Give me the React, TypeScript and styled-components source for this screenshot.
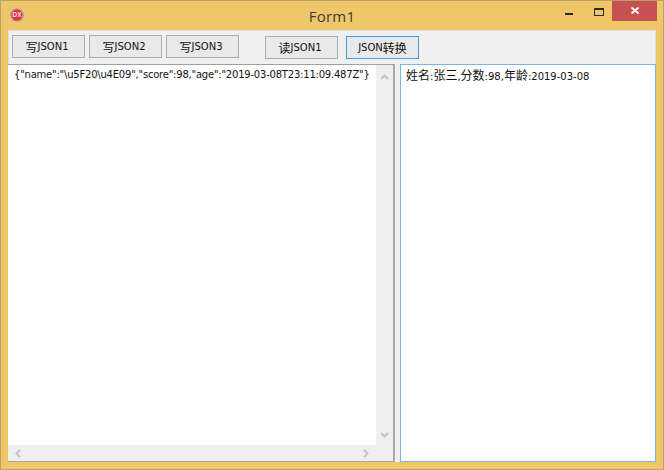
import React from "react";
import styled, { createGlobalStyle } from "styled-components";

const Global = createGlobalStyle`
  html, body { margin: 0; padding: 0; width: 664px; height: 470px; overflow: hidden; background: #efc768; }
  #root { width: 664px; height: 470px; }
`;

const Win = styled.div`
  box-sizing: border-box;
  width: 664px;
  height: 470px;
  display: flex;
  flex-direction: column;
  background: #efc768;
  border: 1px solid #b9a268;
  font-family: "DejaVu Sans", "Noto Sans CJK SC", sans-serif;
`;

const TitleBar = styled.div`
  position: relative;
  height: 29px;
  flex: none;
  display: flex;
  align-items: center;
  justify-content: center;
`;

const Title = styled.div`
  font-family: "Open Sans", sans-serif;
  font-size: 15px;
  color: #3c3c3c;
  margin-top: 1px;
  letter-spacing: 0.2px;
`;

const AppIcon = styled.svg`
  position: absolute;
  left: 9px;
  top: 7px;
`;

const Controls = styled.div`
  position: absolute;
  right: 6px;
  top: 0;
  display: flex;
  align-items: flex-start;
`;

const Ctl = styled.div<{ $w: number }>`
  width: ${(p) => p.$w}px;
  height: 20px;
  display: flex;
  align-items: center;
  justify-content: center;
`;

const CloseBtn = styled(Ctl)`
  background: #c75050;
`;

const Client = styled.div`
  flex: 1;
  margin: 0 7px 7px 7px;
  border: 1px solid #dcdcdc;
  border-bottom: 0;
  background: #f0f0f0;
  display: flex;
  flex-direction: column;
  min-height: 0;
`;

const Toolbar = styled.div`
  height: 33px;
  flex: none;
  display: flex;
  align-items: flex-start;
  padding: 4px 0 0 0;
  box-sizing: border-box;
`;

const Btn = styled.button<{ $ml?: number; $mt?: number; $focus?: boolean }>`
  box-sizing: border-box;
  width: 73px;
  height: 23px;
  margin-left: ${(p) => p.$ml ?? 4}px;
  margin-top: ${(p) => p.$mt ?? 0}px;
  padding: 0 ${(p) => (p.$focus ? 0 : 3)}px 0 0;
  border: 1px solid ${(p) => (p.$focus ? "#3c9df0" : "#adadad")};
  background: #e9e9e9;
  color: #111;
  font-family: "DejaVu Sans", "Noto Sans CJK SC", sans-serif;
  font-size: 10px;
  display: flex;
  align-items: center;
  justify-content: center;
  white-space: pre;
`;

const Cjk = styled.span`
  font-family: "Noto Sans CJK SC", sans-serif;
  font-size: 12px;
  letter-spacing: 0;
`;

const Panes = styled.div`
  flex: 1;
  display: flex;
  min-height: 0;
`;

const LeftMemo = styled.div`
  box-sizing: border-box;
  width: 387px;
  flex: none;
  border-top: 1px solid #a0a0a0;
  border-right: 2px solid #a9a9a9;
  border-bottom: 1px solid #a9a9a9;
  background: #fff;
  display: grid;
  grid-template-columns: minmax(0, 1fr) 17px;
  grid-template-rows: minmax(0, 1fr) 16px;
  margin-left: -1px;
`;

const MemoText = styled.div`
  padding: 3px 0 0 6px;
  font-size: 10px;
  line-height: 14px;
  color: #111;
  white-space: pre;
  letter-spacing: -0.21px;
`;

const VScroll = styled.div`
  grid-row: 1 / 3;
  grid-column: 2;
  background: #efefef;
  display: flex;
  flex-direction: column;
  align-items: center;
  justify-content: space-between;
  padding: 8px 0 22px;
  box-sizing: border-box;
`;

const HScroll = styled.div`
  background: #efefef;
  display: flex;
  align-items: center;
  justify-content: space-between;
  padding: 0 6px;
`;

const Splitter = styled.div`
  width: 5px;
  flex: none;
`;

const RightMemo = styled.div`
  flex: 1;
  box-sizing: border-box;
  border: 1px solid #7ab5e8;
  background: #fff;
  padding: 3px 0 0 5px;
  font-size: 10px;
  line-height: 14px;
  color: #111;
  white-space: pre;
  margin-right: -1px;
`;

const Chev = ({ d }: { d: string }) => (
  <svg width="9" height="9" viewBox="0 0 9 9">
    <path d={d} fill="none" stroke="#c4c4c4" strokeWidth="2" />
  </svg>
);

export default function App() {
  return (
    <Win>
      <Global />
      <TitleBar>
        <AppIcon width="14" height="14" viewBox="0 0 14 14">
          <circle cx="7" cy="7" r="7" fill="#b5a8a0" />
          <circle cx="7" cy="7" r="5.6" fill="#e5303c" />
          <text x="7" y="9.2" textAnchor="middle" fontFamily="Liberation Sans" fontWeight="700" fontSize="6.5" fill="#fbe0e0">DX</text>
        </AppIcon>
        <Title>Form1</Title>
        <Controls>
          <Ctl $w={34}>
            <svg width="10" height="20" viewBox="0 0 10 20">
              <rect x="1" y="12" width="8" height="2" fill="#2c2c2c" />
            </svg>
          </Ctl>
          <Ctl $w={26}>
            <svg width="12" height="20" viewBox="0 0 12 20">
              <rect x="1.5" y="7.5" width="9" height="7" fill="none" stroke="#2c2c2c" />
              <rect x="1" y="7" width="10" height="2" fill="#2c2c2c" />
            </svg>
          </Ctl>
          <CloseBtn $w={45}>
            <svg width="10" height="10" viewBox="0 0 10 10">
              <path d="M1.5 1.5l7 6M8.5 1.5l-7 6" stroke="#fff" strokeWidth="1.8" />
            </svg>
          </CloseBtn>
        </Controls>
      </TitleBar>
      <Client>
        <Toolbar>
          <Btn $ml={3}><Cjk>写</Cjk>JSON1</Btn>
          <Btn><Cjk>写</Cjk>JSON2</Btn>
          <Btn><Cjk>写</Cjk>JSON3</Btn>
          <Btn $ml={26} $mt={1}><Cjk>读</Cjk>JSON1</Btn>
          <Btn $ml={8} $mt={1} $focus>JSON<Cjk>转换</Cjk></Btn>
        </Toolbar>
        <Panes>
          <LeftMemo>
            <MemoText>{'{"name":"\\u5F20\\u4E09","score":98,"age":"2019-03-08T23:11:09.487Z"}'}</MemoText>
            <VScroll>
              <Chev d="M1 6l3.5-3.5L8 6" />
              <Chev d="M1 3l3.5 3.5L8 3" />
            </VScroll>
            <HScroll>
              <Chev d="M6 1L2.5 4.5 6 8" />
              <Chev d="M3 1l3.5 3.5L3 8" />
            </HScroll>
          </LeftMemo>
          <Splitter />
          <RightMemo>
            <Cjk>姓名</Cjk>:<Cjk>张三</Cjk>,<Cjk>分数</Cjk>:98,<Cjk>年龄</Cjk>:2019-03-08
          </RightMemo>
        </Panes>
      </Client>
    </Win>
  );
}
